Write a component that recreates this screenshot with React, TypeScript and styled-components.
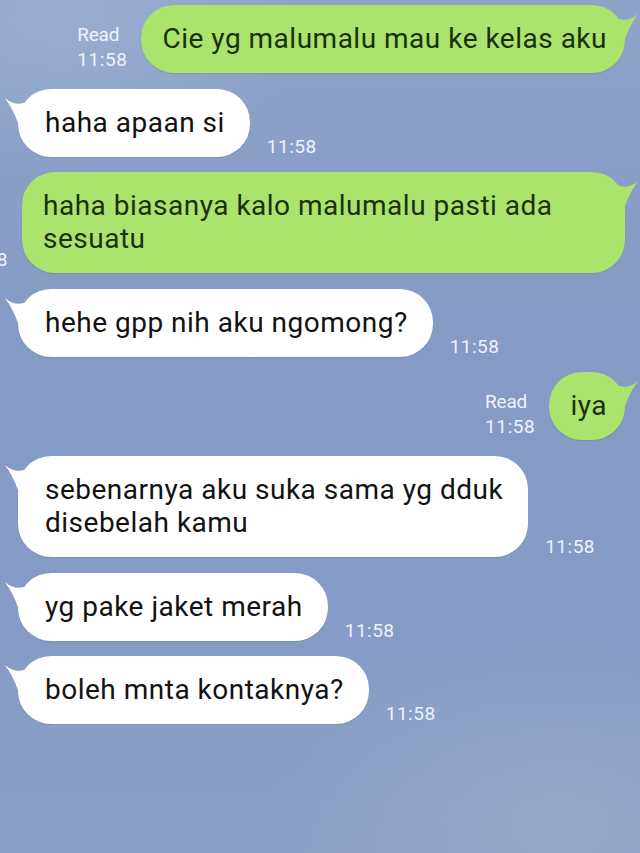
import React from "react";
import styled, { createGlobalStyle } from "styled-components";

const Global = createGlobalStyle`
  html, body { margin: 0; padding: 0; }
  body { font-family: Roboto, "Noto Sans", "Liberation Sans", sans-serif; }
`;

const Screen = styled.div`
  width: 640px;
  height: 853px;
  overflow: hidden;
  background:
    radial-gradient(ellipse 420px 260px at 560px 820px, rgba(160,176,204,0.55), rgba(160,176,204,0) 70%),
    radial-gradient(ellipse 360px 220px at 60px 20px, rgba(160,180,212,0.6), rgba(160,180,212,0) 70%),
    linear-gradient(180deg, #8ea3c9 0%, #849bc5 40%, #849cc6 70%, #8aa0c6 100%);
  display: flex;
  flex-direction: column;
  gap: 15.6px;
  padding-top: 5px;
  box-sizing: border-box;
`;

const Row = styled.div<{ $sent?: boolean }>`
  display: flex;
  align-items: flex-end;
  justify-content: ${(p) => (p.$sent ? "flex-end" : "flex-start")};
  padding: ${(p) => (p.$sent ? "0 15px 0 0" : "0 45px 0 18px")};
  gap: ${(p) => (p.$sent ? "14px" : "17px")};
`;

const Bubble = styled.div<{ $sent?: boolean }>`
  position: relative;
  box-sizing: border-box;
  background: ${(p) => (p.$sent ? "#aae46c" : "#ffffff")};
  color: ${(p) => (p.$sent ? "#1a3010" : "#121212")};
  font-size: 28px;
  line-height: 33px;
  letter-spacing: 0.5px;
  padding: ${(p) => (p.$sent ? "17px 18px 18px 21px" : "17px 25px 18px 27px")};
  border-radius: 33px;
  flex: ${(p) => (p.$sent ? "0 0 auto" : "0 1 auto")};
  max-width: 603px;
  min-width: 0;
  box-shadow: 0 1px 1px rgba(40, 60, 100, 0.15);
`;

const Tail = styled.svg<{ $sent?: boolean }>`
  position: absolute;
  top: 0;
  width: 30px;
  height: 34px;
  ${(p) => (p.$sent ? "right: -14px; transform: scaleX(-1);" : "left: -14px;")}
`;

const Meta = styled.div`
  flex: 0 0 auto;
  display: flex;
  flex-direction: column;
  align-items: flex-start;
  color: #eef2fa;
  font-size: 19px;
  line-height: 25px;
  padding-bottom: 1px;
`;

const ReadLabel = styled.span`
  letter-spacing: -0.2px;
`;

const MetaTime = styled.span`
  letter-spacing: 0.6px;
`;

const Time = styled.div`
  flex: 0 0 auto;
  color: #eef2fa;
  font-size: 19px;
  line-height: 20px;
  letter-spacing: 0.5px;
`;

const BubbleTail = ({ sent }: { sent?: boolean }) => (
  <Tail $sent={sent} viewBox="0 0 30 34">
    <path
      d="M1 9 Q 10 17 20 14 L 30 14 L 30 34 L 14 34 Q 9 20 1 9 Z"
      fill={sent ? "#aae46c" : "#ffffff"}
    />
  </Tail>
);

type Msg = { sent: boolean; text: React.ReactNode };

const messages: Msg[] = [
  { sent: true, text: "Cie yg malumalu mau ke kelas aku" },
  { sent: false, text: "haha apaan si" },
  { sent: true, text: "haha biasanya kalo malumalu pasti ada sesuatu" },
  { sent: false, text: "hehe gpp nih aku ngomong?" },
  { sent: true, text: "iya" },
  { sent: false, text: "sebenarnya aku suka sama yg dduk disebelah kamu" },
  { sent: false, text: "yg pake jaket merah" },
  { sent: false, text: "boleh mnta kontaknya?" },
];

export default function App() {
  return (
    <>
      <Global />
      <Screen>
        {messages.map((m, i) =>
          m.sent ? (
            <Row $sent key={i}>
              <Meta>
                <ReadLabel>Read</ReadLabel>
                <MetaTime>11:58</MetaTime>
              </Meta>
              <Bubble $sent>
                <BubbleTail sent />
                {m.text}
              </Bubble>
            </Row>
          ) : (
            <Row key={i}>
              <Bubble>
                <BubbleTail />
                {m.text}
              </Bubble>
              <Time>11:58</Time>
            </Row>
          )
        )}
      </Screen>
    </>
  );
}
